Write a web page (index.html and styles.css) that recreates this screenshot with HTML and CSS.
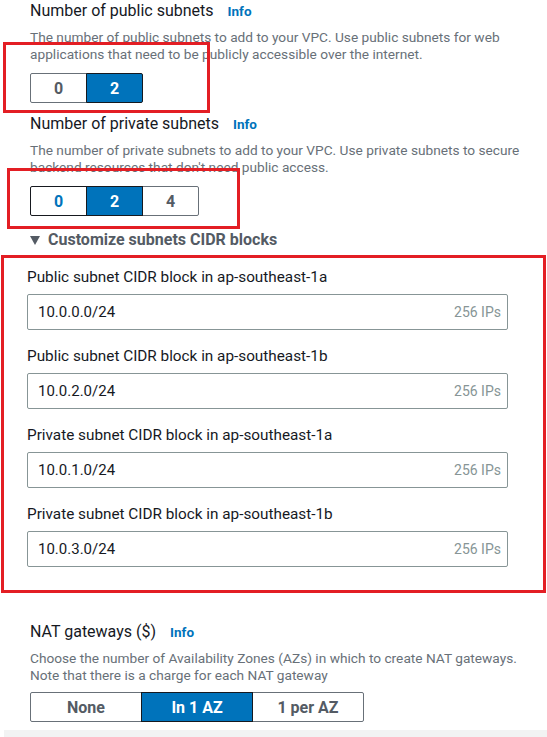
FILE: index.html
```html
<!DOCTYPE html>
<html>
<head>
<meta charset="utf-8">
<link rel="stylesheet" href="styles.css">
</head>
<body>
<div class="page">
  <section class="field first">
    <div class="title-row"><span class="title">Number of public subnets</span><a class="info">Info</a></div>
    <p class="desc">The number of public subnets to add to your VPC. Use public subnets for web applications that need to be publicly accessible over the internet.</p>
    <div class="seg seg-small">
      <button class="opt">0</button>
      <button class="opt sel">2</button>
    </div>
    <div class="mark mark-a"></div>
  </section>

  <section class="field second">
    <div class="title-row"><span class="title">Number of private subnets</span><a class="info">Info</a></div>
    <p class="desc">The number of private subnets to add to your VPC. Use private subnets to secure backend resources that don't need public access.</p>
    <div class="seg seg-small">
      <button class="opt focus">0</button>
      <button class="opt sel">2</button>
      <button class="opt">4</button>
    </div>
    <div class="mark mark-b"></div>
  </section>

  <div class="expander"><span class="caret"></span>Customize subnets CIDR blocks</div>

  <div class="cidr-box">
    <div class="cidr">
      <label>Public subnet CIDR block in ap-southeast-1a</label>
      <div class="input"><span class="val">10.0.0.0/24</span><span class="ips">256 IPs</span></div>
    </div>
    <div class="cidr">
      <label>Public subnet CIDR block in ap-southeast-1b</label>
      <div class="input"><span class="val">10.0.2.0/24</span><span class="ips">256 IPs</span></div>
    </div>
    <div class="cidr">
      <label>Private subnet CIDR block in ap-southeast-1a</label>
      <div class="input"><span class="val">10.0.1.0/24</span><span class="ips">256 IPs</span></div>
    </div>
    <div class="cidr">
      <label>Private subnet CIDR block in ap-southeast-1b</label>
      <div class="input"><span class="val">10.0.3.0/24</span><span class="ips">256 IPs</span></div>
    </div>
  </div>

  <section class="field nat">
    <div class="title-row"><span class="title">NAT gateways ($)</span><a class="info">Info</a></div>
    <p class="desc">Choose the number of Availability Zones (AZs) in which to create NAT gateways. Note that there is a charge for each NAT gateway</p>
    <div class="seg seg-wide">
      <button class="opt">None</button>
      <button class="opt sel">In 1 AZ</button>
      <button class="opt">1 per AZ</button>
    </div>
  </section>
  <div class="footer-strip"></div>
</div>
</body>
</html>
```
FILE: styles.css
```css
* { box-sizing: border-box; }
html, body { margin: 0; padding: 0; background: #fff; }
body {
  font-family: Roboto, "Liberation Sans", Arial, sans-serif;
  color: #16191f;
  width: 547px;
  height: 737px;
  overflow: hidden;
}
.page { position: relative; }

.field { position: relative; padding-left: 30px; }
.first { padding-top: 1px; }
.second { padding-top: 11px; }

.title-row { display: flex; align-items: baseline; gap: 14px; height: 20px; }
.title { font-size: 16px; line-height: 20px; color: #16191f; }
.info { font-size: 13.5px; font-weight: 700; color: #0073bb; text-decoration: none; }

.desc {
  margin: 8px 0 0;
  font-size: 13.7px;
  line-height: 17px;
  color: #687078;
  max-width: 500px;
}

.seg { display: flex; margin-top: 10px; }
.opt {
  font-family: inherit;
  font-size: 16px;
  font-weight: 700;
  color: #545b64;
  background: #fff;
  border: 1px solid #687078;
  padding: 0;
  margin: 0 0 0 -1px;
  height: 30px;
}
.opt:first-child { margin-left: 0; border-radius: 2px 0 0 2px; }
.opt:last-child { border-radius: 0 2px 2px 0; }
.seg-small .opt { width: 57px; }
.seg-wide .opt { width: 112px; }
.opt.sel { background: #0073bb; color: #fff; border-color: #16191f; position: relative; }
.opt.focus { color: #0073bb; border-color: #16191f; }

.mark {
  position: absolute;
  border: 3px solid #e31e24;
}
.mark-a { left: 3px; top: 42px; width: 207px; height: 71px; }
.mark-b { left: 7px; top: 65px; width: 233px; height: 61px; }

.expander {
  margin-top: 14px;
  padding-left: 30px;
  font-size: 16px;
  font-weight: 700;
  color: #545b64;
  line-height: 20px;
  display: flex;
  align-items: center;
}
.caret {
  width: 0; height: 0;
  border-left: 5.5px solid transparent;
  border-right: 5.5px solid transparent;
  border-top: 9px solid #545b64;
  margin-right: 8px;
}

.cidr-box {
  margin: 5px 1px 0 1px;
  border: 3px solid #e31e24;
  padding: 9px 35px 23px 23px;
  display: flex;
  flex-direction: column;
  gap: 16px;
}
.cidr label { display: block; font-size: 15.3px; line-height: 20px; color: #16191f; margin-bottom: 7px; }
.input {
  height: 36px;
  border: 1px solid #879596;
  border-radius: 2px;
  display: flex;
  align-items: center;
  justify-content: space-between;
  padding: 0 6px 0 10px;
}
.val { font-size: 15px; color: #16191f; }
.ips { font-size: 14px; color: #879596; }

.nat { margin-top: 29px; }
.nat .desc { margin-top: 8px; }
.nat .seg { margin-top: 8px; }

.footer-strip {
  margin: 8px 0 0 4px;
  height: 10px;
  background: #f2f3f3;
}
```
